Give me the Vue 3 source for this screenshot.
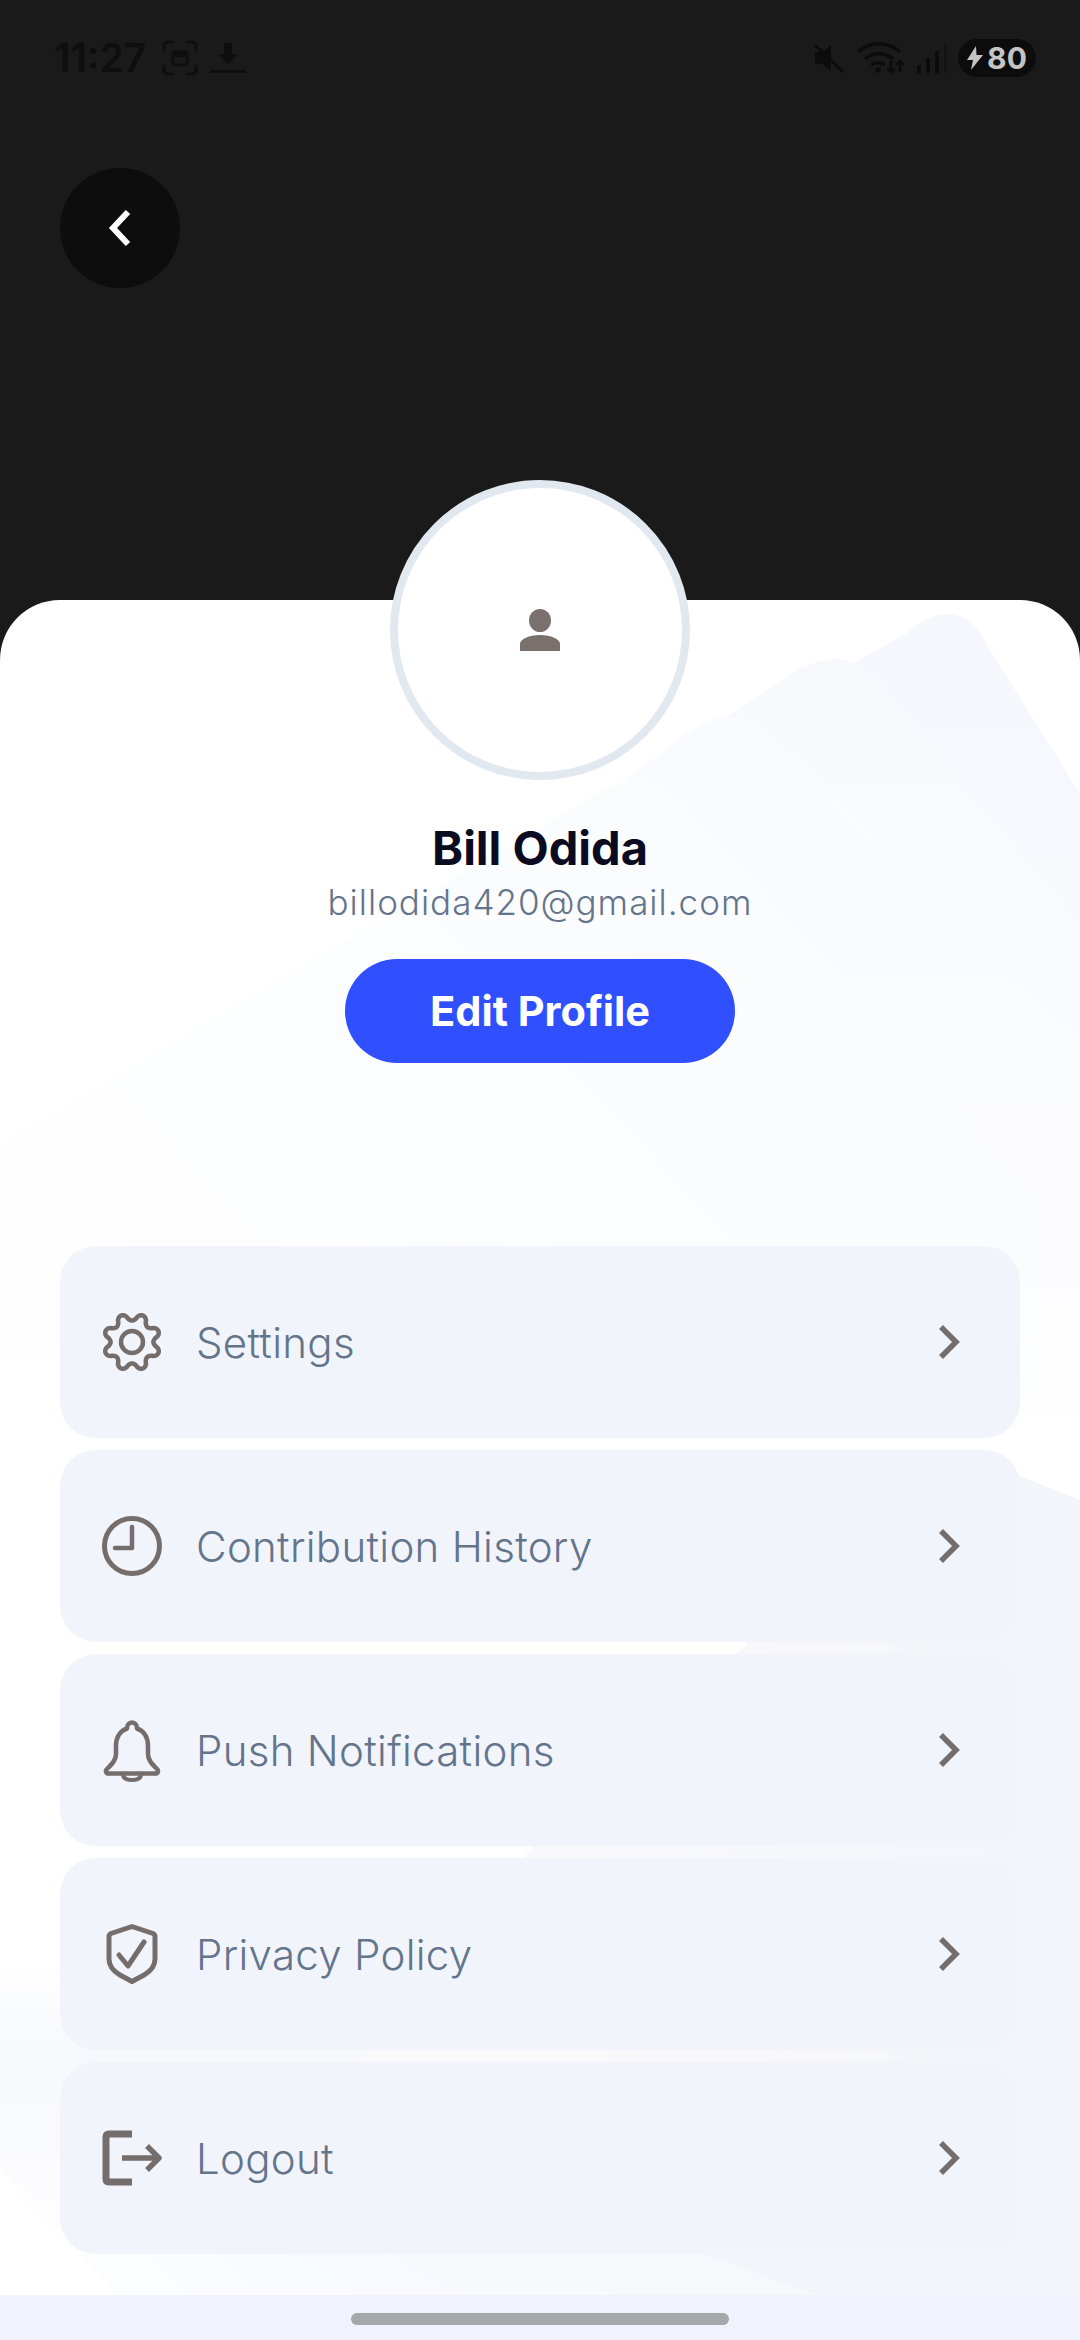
<script setup>
const gearPath = (() => {
  const pts = []
  const n = 240
  for (let i = 0; i < n; i++) {
    const t = (i / n) * Math.PI * 2
    const c = Math.cos(8 * t + Math.PI)
    const s = Math.sign(c) * Math.pow(Math.abs(c), 0.7)
    const r = 25 + 3.6 * s
    pts.push(`${(30 + r * Math.sin(t)).toFixed(2)} ${(30 - r * Math.cos(t)).toFixed(2)}`)
  }
  return 'M' + pts.join('L') + 'Z'
})()

const rows = [
  { key: 'gear', label: 'Settings' },
  { key: 'clock', label: 'Contribution History' },
  { key: 'bell', label: 'Push Notifications' },
  { key: 'shield', label: 'Privacy Policy' },
  { key: 'logout', label: 'Logout' },
]
</script>

<template>
  <div class="page">
    <header class="top">
      <div class="status">
        <div class="status-left">
          <span class="time">11:27</span>
          <svg class="st-ic" width="36" height="36" viewBox="0 0 36 36" fill="none" stroke="#0e0e0e" stroke-width="3">
            <path d="M2 11V6q0-4 4-4h5M25 2h5q4 0 4 4v5M34 25v5q0 4-4 4h-5M11 34H6q-4 0-4-4v-5" />
            <rect x="11" y="12" width="14" height="13" rx="2" />
            <path d="M11 15h14" stroke-width="4" />
          </svg>
          <svg class="st-ic" width="36" height="32" viewBox="0 0 36 32" fill="#0e0e0e">
            <path d="M14 1h8v11h6L18 22 8 12h6z" />
            <rect x="0" y="28" width="36" height="3" />
          </svg>
        </div>
        <div class="status-right">
          <svg width="32" height="30" viewBox="0 0 32 30" fill="#0c0c0c">
            <path d="M1 9h7l9-7v26l-9-7H1z" />
            <path d="M0 3l2-2 28 27-2 2z" />
          </svg>
          <svg width="50" height="32" viewBox="0 0 50 32" fill="none" stroke="#0c0c0c" stroke-width="3.4">
            <path d="M2 10C14-1 32-1 44 10M9 17C17 10 29 10 37 17M15 23C19 20 25 20 29 23" />
            <circle cx="22" cy="28" r="2.8" fill="#0c0c0c" stroke="none" />
            <path d="M35 19v11M31 26l4 4 4-4M44 30V19M40 23l4-4 4 4" stroke-width="2.4" />
          </svg>
          <svg width="32" height="32" viewBox="0 0 32 32" fill="#0c0c0c">
            <rect x="1" y="23" width="4" height="8" rx="1" />
            <rect x="10" y="16" width="4" height="15" rx="1" />
            <rect x="19" y="9" width="4" height="22" rx="1" />
            <rect x="28" y="1" width="3" height="30" rx="1" fill="#141414" />
          </svg>
          <div class="battery">
            <svg width="16" height="24" viewBox="0 0 16 24" fill="#c4c4c4">
              <path d="M9 0L0 14h6L4 24l12-15H9.500z" />
            </svg>
            <span>80</span>
          </div>
        </div>
      </div>
      <button class="back" aria-label="Back">
        <svg width="24" height="36" viewBox="0 0 24 36" fill="none" stroke="#fff" stroke-width="6">
          <path d="M20 2L5 18l15 16" />
        </svg>
      </button>
    </header>

    <main class="sheet">
      <div class="deco">
        <svg width="1080" height="1740" viewBox="0 600 1080 1740">
          <defs>
            <linearGradient id="g1" gradientUnits="userSpaceOnUse" x1="0" y1="610" x2="0" y2="1300">
              <stop offset="0" stop-color="#f5f7fc" />
              <stop offset="1" stop-color="#fafbfe" />
            </linearGradient>
            <linearGradient id="g2" gradientUnits="userSpaceOnUse" x1="0" y1="660" x2="0" y2="1300">
              <stop offset="0" stop-color="#f8f9fd" />
              <stop offset="1" stop-color="#fbfcfe" />
            </linearGradient>
            <linearGradient id="g3" gradientUnits="userSpaceOnUse" x1="0" y1="715" x2="0" y2="1300">
              <stop offset="0" stop-color="#fafbfe" />
              <stop offset="1" stop-color="#fcfcfe" />
            </linearGradient>
            <linearGradient id="g4" gradientUnits="userSpaceOnUse" x1="640" y1="780" x2="120" y2="1260">
              <stop offset="0" stop-color="#fbfcfe" />
              <stop offset="0.5" stop-color="#fcfdfe" />
              <stop offset="1" stop-color="#fefeff" />
            </linearGradient>
            <linearGradient id="g5" gradientUnits="userSpaceOnUse" x1="600" y1="1800" x2="1000" y2="1800">
              <stop offset="0" stop-color="#f9f9fc" />
              <stop offset="1" stop-color="#f4f5fa" />
            </linearGradient>
            <linearGradient id="g6" gradientUnits="userSpaceOnUse" x1="0" y1="1960" x2="0" y2="2254">
              <stop offset="0" stop-color="#fff" />
              <stop offset="0.34" stop-color="#f7f8fc" />
              <stop offset="0.75" stop-color="#fcfcff" />
              <stop offset="1" stop-color="#fff" />
            </linearGradient>
            <linearGradient id="fade" gradientUnits="userSpaceOnUse" x1="0" y1="1240" x2="0" y2="1450">
              <stop offset="0" stop-color="#fff" stop-opacity="0" />
              <stop offset="1" stop-color="#fff" stop-opacity="1" />
            </linearGradient>
          </defs>
          <path fill="url(#g1)" d="M560 830L905 634C945 600 972 612 990 650L1200 985V1460H560Z" />
          <path fill="url(#g2)" d="M600 800L780 682C825 648 855 655 880 682L1120 970V1460H600Z" />
          <path fill="url(#g3)" d="M580 815L680 738C720 706 750 712 780 745L1120 1080V1460H580Z" />
          <path fill="url(#g4)" d="M0 1145L595 795C635 770 660 778 686 808L1040 1200V1460H0Z" />
          <rect fill="url(#fade)" x="0" y="1240" width="1080" height="220" />
          <rect fill="url(#g6)" x="0" y="1960" width="700" height="294" />
          <path fill="url(#g5)" d="M1080 1500L960 1452L868 1460L745 1646L530 1850L360 2056V2340H1080Z" />
          <path fill="#f4f5fa" d="M0 2254H1080V2296H0Z" />
          <path fill="#f7f8fc" d="M0 2254H702L820 2296H0Z" />
          <path fill="#f8f9fd" d="M0 2254H510L613 2296H0Z" />
          <path fill="#f9faff" d="M0 2254H386L465 2296H0Z" />
          <path fill="#fafbff" d="M0 2254H289L355 2296H0Z" />
          <path fill="#fbfcff" d="M0 2254H213L265 2296H0Z" />
          <path fill="#fcfdff" d="M0 2254H145L193 2296H0Z" />
          <path fill="#fff" d="M0 2170L120 2296H0Z" />
        </svg>
      </div>

      <div class="avatar">
        <svg width="42" height="42" viewBox="0 0 42 42" fill="#7a706e">
          <ellipse cx="21" cy="11.500" rx="11" ry="11.500" />
          <path d="M1 42V35C1 30 10 26 21 26S41 30 41 35V42Z" />
        </svg>
      </div>
      <h1 class="name">Bill Odida</h1>
      <p class="email">billodida420@gmail.com</p>
      <button class="edit">Edit Profile</button>

      <ul class="menu">
        <li v-for="row in rows" :key="row.key" class="row">
          <svg class="icon" width="60" height="60" viewBox="0 0 60 60" fill="none" stroke="#756d6b" stroke-linecap="round" stroke-linejoin="round">
            <template v-if="row.key === 'gear'">
              <path :d="gearPath" stroke-width="4.500" />
              <circle cx="30" cy="30" r="11" stroke-width="4.500" />
            </template>
            <template v-else-if="row.key === 'clock'">
              <circle cx="30" cy="30" r="27.500" stroke-width="5" />
              <path d="M30 11V32H13" stroke-width="4.500" />
            </template>
            <template v-else-if="row.key === 'bell'">
              <path d="M25 8.500C25 5 27 2.500 30 2.500S35 5 35 8.500C42.500 11 46 18 46 26V34C46 40 50 44 55 49C57 51 56 53.500 53 53.500H7C4 53.500 3 51 5 49C10 44 14 40 14 34V26C14 18 17.500 11 25 8.500Z" stroke-width="4.500" />
              <path d="M21 54C21 59 26 60 30 60S39 59 39 54" stroke-width="4" />
            </template>
            <template v-else-if="row.key === 'shield'">
              <path d="M30 2.500L51 9.500Q53 10.500 53 13V35C53 42 49 47 42 51L30 57.500L18 51C11 47 7 42 7 35V13Q7 10.500 9 9.500Z" stroke-width="5" />
              <path d="M17 31L26 42L42 18" stroke-width="5" />
            </template>
            <template v-else>
              <path d="M30 6H7Q4 6 4 9V51Q4 54 7 54H30" stroke-width="7" stroke-linecap="butt" />
              <path d="M20 30H56M45 18L57 30L45 42" stroke-width="5.500" stroke-linecap="butt" />
            </template>
          </svg>
          <span class="label">{{ row.label }}</span>
          <svg class="chev" width="24" height="36" viewBox="0 0 24 36" fill="none" stroke="#756d6b" stroke-width="5.500">
            <path d="M4 3L19 18L4 33" />
          </svg>
        </li>
      </ul>
    </main>

    <footer class="nav">
      <div class="handle"></div>
    </footer>
  </div>
</template>

<style>
html, body { margin: 0; background: #f0f3fb; }
</style>

<style scoped>
.page {
  width: 1080px;
  height: 2340px;
  display: flex;
  flex-direction: column;
  overflow: hidden;
  font-family: Inter, "Liberation Sans", sans-serif;
  background: #1a1a1a;
}
.top {
  height: 600px;
  flex: none;
  background: #1a1a1a;
  padding: 36px 44px 0 54px;
  box-sizing: border-box;
}
.status {
  height: 44px;
  display: flex;
  justify-content: space-between;
  align-items: center;
}
.status-left, .status-right { display: flex; align-items: center; }
.time {
  font-size: 39px;
  font-weight: 600;
  color: #0e0e0e;
  line-height: 44px;
  margin-right: 16px;
}
.st-ic { margin-right: 12px; }
.status-right { gap: 10px; }
.battery {
  width: 78px;
  height: 38px;
  border-radius: 19px;
  background: #0c0c0c;
  color: #c4c4c4;
  display: flex;
  align-items: center;
  justify-content: center;
  gap: 4px;
  font-size: 30px;
  font-weight: 700;
}
.back {
  display: flex;
  align-items: center;
  justify-content: center;
  width: 120px;
  height: 120px;
  margin: 88px 0 0 6px;
  padding: 0;
  border: 0;
  border-radius: 50%;
  background: #0d0d0d;
}
.sheet {
  position: relative;
  flex: 1;
  background: #fff;
  border-radius: 60px 60px 0 0;
  display: flex;
  flex-direction: column;
  align-items: center;
}
.deco {
  position: absolute;
  inset: 0;
  overflow: hidden;
  border-radius: 60px 60px 0 0;
}
.deco svg { display: block; }
.avatar {
  position: relative;
  width: 300px;
  height: 300px;
  margin-top: -120px;
  box-sizing: border-box;
  border: 8px solid #e2e8f0;
  border-radius: 50%;
  background: #fff;
  display: flex;
  align-items: center;
  justify-content: center;
}
.name {
  position: relative;
  margin: 40px 0 0;
  font-size: 47px;
  line-height: 56px;
  font-weight: 700;
  color: #0a0a20;
}
.email {
  position: relative;
  margin: 4px 0 0;
  font-size: 35px;
  line-height: 44px;
  font-weight: 300;
  letter-spacing: 1px;
  color: #64748b;
}
.edit {
  position: relative;
  width: 390px;
  height: 104px;
  margin-top: 35px;
  border: 0;
  border-radius: 52px;
  background: #304ffe;
  color: #fff;
  font-family: inherit;
  font-size: 41.500px;
  font-weight: 700;
  flex: none;
}
.menu {
  position: relative;
  list-style: none;
  width: 960px;
  margin: 183px 0 0;
  padding: 0;
  display: flex;
  flex-direction: column;
  gap: 12px;
}
.row {
  height: 192px;
  border-radius: 36px;
  background: #f1f4fb;
  display: flex;
  align-items: center;
  padding: 0 59px 0 42px;
  box-sizing: border-box;
}
.icon { flex: none; overflow: visible; }
.label {
  flex: 1;
  margin-left: 34px;
  font-size: 42px;
  font-weight: 300;
  letter-spacing: 0.3px;
  color: #64748b;
}
.chev { flex: none; }
.nav {
  height: 45px;
  flex: none;
  background: #f0f3fb;
  position: relative;
  display: flex;
  justify-content: center;
  padding-top: 18px;
  box-sizing: border-box;
}
.handle {
  width: 378px;
  height: 12px;
  border-radius: 6px;
  background: #a4a8ab;
}
</style>
